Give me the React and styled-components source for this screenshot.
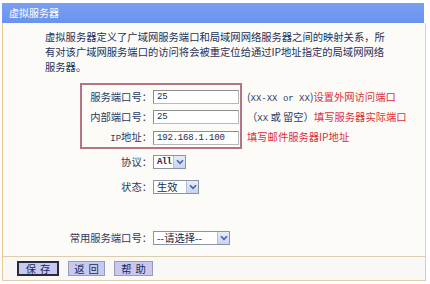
import React from 'react';
import styled, { createGlobalStyle } from 'styled-components';

const Global = createGlobalStyle`
  html, body { margin: 0; padding: 0; background: #ffffff; }
  body { font-family: "Noto Sans CJK SC", sans-serif; }
`;

const Page = styled.div`
  width: 430px;
  height: 284px;
  box-sizing: border-box;
  padding: 3px 0 0 2px;
`;

const Panel = styled.div`
  width: 424px;
  box-sizing: border-box;
`;

const TitleBar = styled.div`
  height: 20px;
  background: linear-gradient(#7aa0f2, #6a93ee);
  color: #ffffff;
  font-size: 10px;
  line-height: 20px;
  padding-left: 7px;
  margin-right: 2px;
`;

const Body = styled.div`
  border-left: 1px solid #ecc794;
  border-right: 1px solid #e2d2b4;
  background: #fcfbf8;
  padding: 6px 0 6px 0;
`;

const Desc = styled.div`
  padding-left: 42px;
  font-size: 10.3px;
  line-height: 15px;
  color: #1e2f55;
  white-space: nowrap;
`;

const Group = styled.div`
  display: flex;
  align-items: flex-start;
  margin-top: 9px;
  padding-left: 77px;
`;

const Box = styled.div`
  width: 162px;
  box-sizing: border-box;
  border: 2px solid #b47482;
  padding: 2px 1px 0 0;
`;

const BoxRow = styled.div`
  display: grid;
  grid-template-columns: 70px 86px;
  column-gap: 1px;
  height: 20px;
  align-items: center;
`;

const Label = styled.div`
  text-align: right;
  font-size: 10.3px;
  color: #283a60;
  white-space: nowrap;
  line-height: 20px;
`;

const Input = styled.div`
  height: 14px;
  box-sizing: border-box;
  background: #ffffff;
  border: 1px solid #8d8d8d;
  border-right-color: #b8b8b8;
  border-bottom-color: #b8b8b8;
  font-family: "Liberation Mono", monospace;
  font-size: 9px;
  letter-spacing: -0.2px;
  line-height: 12px;
  padding-left: 3px;
  color: #1c2a48;
`;

const Hints = styled.div`
  margin-left: 5px;
  padding-top: 4px;
`;

const Hint = styled.div`
  height: 20px;
  line-height: 20px;
  font-size: 10.3px;
  white-space: nowrap;
  color: ${p => (p.$red ? '#d8313a' : '#2a3c64')};
`;

const Red = styled.span`
  color: #d8313a;
`;

const Mono = styled.span`
  font-family: "Liberation Mono", monospace;
  font-size: 9px;
`;

const Row = styled.div`
  display: grid;
  grid-template-columns: 149px auto;
  column-gap: 1px;
  height: 25px;
  align-items: center;
  margin-top: ${p => p.$gap || 0}px;
`;

const Field = styled.div`
  display: flex;
  align-items: center;
`;

const Select = styled.div`
  display: inline-flex;
  align-items: stretch;
  height: 14px;
  box-sizing: border-box;
  border: 1px solid #8c93a3;
  background: #ffffff;
  min-width: ${p => p.$w}px;
`;

const SelectText = styled.div`
  flex: 1;
  font-size: 10.3px;
  line-height: 12px;
  padding: 0 2px 0 3px;
  color: #1c2a48;
  white-space: nowrap;
  font-weight: ${p => (p.$bold ? 700 : 400)};
  font-family: ${p => (p.$mono ? '"Liberation Mono", monospace' : 'inherit')};
  font-size: ${p => (p.$mono ? 9 : 10.3)}px;
  letter-spacing: ${p => (p.$mono ? -0.6 : 0)}px;
`;

const Arrow = styled.div`
  width: 11px;
  flex: none;
  background: linear-gradient(#e6ecf7, #c9d5ec);
  border-left: 1px solid #b3bfd6;
  display: flex;
  align-items: center;
  justify-content: center;
`;

const Footer = styled.div`
  border: 1px solid #dccdae;
  border-left-color: #ecc794;
  background: #f8f8f6;
  height: 23px;
  box-sizing: content-box;
  display: flex;
  align-items: center;
  padding-left: 14px;
  gap: 9px;
`;

const Button = styled.div`
  height: 15px;
  box-sizing: border-box;
  width: ${p => p.$w}px;
  background: #c9c9ef;
  border: ${p => (p.$active ? '2px solid #2b2b38' : '1px solid #9a9ab6')};
  font-size: 10.3px;
  line-height: ${p => (p.$active ? 11 : 13)}px;
  text-align: center;
  letter-spacing: 4px;
  padding-left: 4px;
  color: #1b2858;
`;

const Chevron = () => (
  <svg width="8" height="6" viewBox="0 0 8 6">
    <path d="M1 1.2 L4 4.4 L7 1.2" fill="none" stroke="#3f63b5" strokeWidth="1.6" />
  </svg>
);

export default function App() {
  return (
    <Page>
      <Global />
      <Panel>
        <TitleBar>虚拟服务器</TitleBar>
        <Body>
          <Desc>
            虚拟服务器定义了广域网服务端口和局域网网络服务器之间的映射关系，所<br />
            有对该广域网服务端口的访问将会被重定位给通过IP地址指定的局域网网络<br />
            服务器。
          </Desc>
          <Group>
            <Box>
              <BoxRow>
                <Label>服务端口号：</Label>
                <Input>25</Input>
              </BoxRow>
              <BoxRow>
                <Label>内部端口号：</Label>
                <Input>25</Input>
              </BoxRow>
              <BoxRow>
                <Label><Mono>IP</Mono>地址：</Label>
                <Input>192.168.1.100</Input>
              </BoxRow>
            </Box>
            <Hints>
              <Hint>(<Mono>XX-XX or XX</Mono>)<Red>设置外网访问端口</Red></Hint>
              <Hint>（<Mono>XX</Mono> 或 留空）<Red>填写服务器实际端口</Red></Hint>
              <Hint $red>填写邮件服务器IP地址</Hint>
            </Hints>
          </Group>
          <Row>
            <Label>协议：</Label>
            <Field>
              <Select $w={27}>
                <SelectText $mono $bold>All</SelectText>
                <Arrow><Chevron /></Arrow>
              </Select>
            </Field>
          </Row>
          <Row>
            <Label>状态：</Label>
            <Field>
              <Select $w={46}>
                <SelectText>生效</SelectText>
                <Arrow><Chevron /></Arrow>
              </Select>
            </Field>
          </Row>
          <Row $gap={26}>
            <Label>常用服务端口号：</Label>
            <Field>
              <Select $w={77}>
                <SelectText>--请选择--</SelectText>
                <Arrow><Chevron /></Arrow>
              </Select>
            </Field>
          </Row>
        </Body>
        <Footer>
          <Button $active $w={42}>保存</Button>
          <Button $w={37}>返回</Button>
          <Button $w={39}>帮助</Button>
        </Footer>
      </Panel>
    </Page>
  );
}
